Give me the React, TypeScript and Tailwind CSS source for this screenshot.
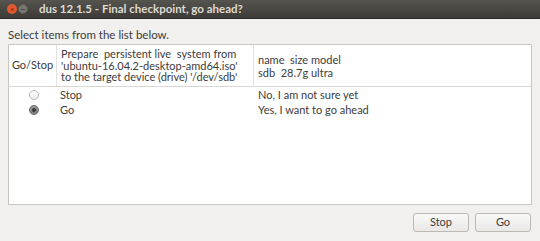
import React from 'react';

const rows = [
  { label: 'Stop', note: 'No, I am not sure yet', checked: false },
  { label: 'Go', note: 'Yes, I want to go ahead', checked: true },
];

function Radio({ checked }: { checked: boolean }) {
  return (
    <span
      className={
        checked
          ? 'flex h-[10px] w-[10px] items-center justify-center rounded-full border border-[#6b6b6b] bg-gradient-to-b from-[#9a9a9a] to-[#7a7a7a]'
          : 'block h-[10px] w-[10px] rounded-full border border-[#b8b8b8] bg-gradient-to-b from-white to-[#ececec]'
      }
    >
      {checked && <span className="block h-[4px] w-[4px] rounded-full bg-[#3a3a3a]" />}
    </span>
  );
}

export default function App() {
  return (
    <div
      className="flex h-[241px] w-[540px] flex-col bg-[#f1f0ee] text-[11px] text-[#3c3c3c]"
      style={{ fontFamily: 'Lato, "Liberation Sans", sans-serif' }}
    >
      {/* title bar */}
      <div className="flex h-[19px] items-center bg-gradient-to-b from-[#55544f] to-[#3c3b37] pl-[7px] border-b border-[#2a2a28]">
        <span className="flex h-[10px] w-[10px] items-center justify-center rounded-full bg-[#e2592f] text-[8px] leading-none text-[#6e2412]">
          ×
        </span>
        <span className="ml-[1px] flex h-[10px] w-[10px] items-center justify-center rounded-full bg-[#77766f] border border-[#5f5e58]">
          <span className="block h-[1px] w-[4px] bg-[#4a4945]" />
        </span>
        <span className="ml-[11px] text-[11.5px] font-bold text-[#dfdbd2]">
          dus 12.1.5 - Final checkpoint, go ahead?
        </span>
      </div>

      <div className="flex flex-1 flex-col px-2 pt-[9px] pb-[9px]">
        <div className="text-[11.5px] leading-[14px]">Select items from the list below.</div>

        <div className="mt-[2px] flex-1 border border-[#c9c7c3] bg-white">
          <div className="grid grid-cols-[48px_197px_1fr] border-b border-[#d9d7d4] h-[42px]">
            <div className="flex items-center justify-center border-r border-[#e3e1de]">Go/Stop</div>
            <div className="flex items-center border-r border-[#e3e1de] pl-[4px]">
              <p className="leading-[11.5px]">
                Prepare&nbsp; persistent live&nbsp; system from
                <br />
                'ubuntu-16.04.2-desktop-amd64.iso'
                <br />
                to the target device (drive) '/dev/sdb'
              </p>
            </div>
            <div className="flex items-center pl-[4px]">
              <p className="leading-[13px]">
                name&nbsp; size model
                <br />
                sdb&nbsp; 28.7g ultra
              </p>
            </div>
          </div>
          {rows.map((r) => (
            <div key={r.label} className="grid h-[15px] grid-cols-[48px_198px_1fr] items-center">
              <div className="flex justify-center pl-[2px]">
                <Radio checked={r.checked} />
              </div>
              <div className="pl-[3px]">{r.label}</div>
              <div className="pl-[3px]">{r.note}</div>
            </div>
          ))}
        </div>

        <div className="mt-[8px] flex justify-end gap-[6px] pr-[1px]">
          {['Stop', 'Go'].map((b) => (
            <button
              key={b}
              className="h-[19px] w-[56px] rounded-[3px] border border-[#bcb8b2] bg-gradient-to-b from-[#f8f8f7] to-[#e9e8e6] text-[11px] text-[#3c3c3c]"
            >
              {b}
            </button>
          ))}
        </div>
      </div>
    </div>
  );
}
